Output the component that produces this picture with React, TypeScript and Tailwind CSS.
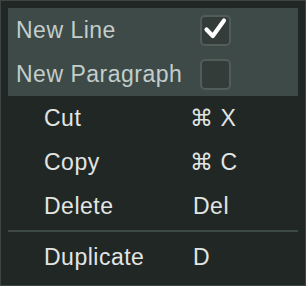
const font = { fontFamily: '"Liberation Sans", Arial, sans-serif' };

function Checkbox({ checked }: { checked?: boolean }) {
  return (
    <div className="w-[31px] h-[31px] rounded-[5px] border-2 border-[#525d5a] bg-[#343c3a] flex items-center justify-center">
      {checked && (
        <svg width="31" height="31" viewBox="0 0 31 31" className="-m-[2px]">
          <path d="M6.5 14.5 L12.8 21 L24 5.5" fill="none" stroke="#ffffff" strokeWidth="4.2" strokeLinecap="round" strokeLinejoin="round" />
        </svg>
      )}
    </div>
  );
}

function ToggleRow({ label, checked }: { label: string; checked?: boolean }) {
  return (
    <div className="h-[44px] flex items-center pl-[8px]">
      <span className="w-[184px] text-[23px] tracking-[0.5px] text-[#c3cdcb] leading-none">{label}</span>
      <Checkbox checked={checked} />
    </div>
  );
}

function ItemRow({ label, shortcut, indent = 0 }: { label: string; shortcut: string; indent?: number }) {
  return (
    <div className="h-[44px] flex items-center pl-[43px]">
      <span className="w-[146px] text-[23px] tracking-[0.5px] text-[#e1e5e3] leading-none">{label}</span>
      <span className="text-[23px] tracking-[0.5px] text-[#e1e5e3] leading-none" style={{ paddingLeft: indent }}>
        {shortcut}
      </span>
    </div>
  );
}

export default function App() {
  return (
    <div style={font} className="w-[306px] h-[286px] bg-[#212725] border border-[#3b4543] overflow-hidden">
      <div className="mt-[7px] mx-[7px] h-[88px] bg-[#3d4a48]">
        <ToggleRow label="New Line" checked />
        <ToggleRow label="New Paragraph" />
      </div>
      <ItemRow label="Cut" shortcut="⌘ X" />
      <ItemRow label="Copy" shortcut="⌘ C" />
      <ItemRow label="Delete" shortcut="Del" indent={3} />
      <div className="mx-[7px] mt-[2px] h-[2px] bg-[#3d4a48]" />
      <div className="mt-[3px]">
        <ItemRow label="Duplicate" shortcut="D" indent={3} />
      </div>
    </div>
  );
}
